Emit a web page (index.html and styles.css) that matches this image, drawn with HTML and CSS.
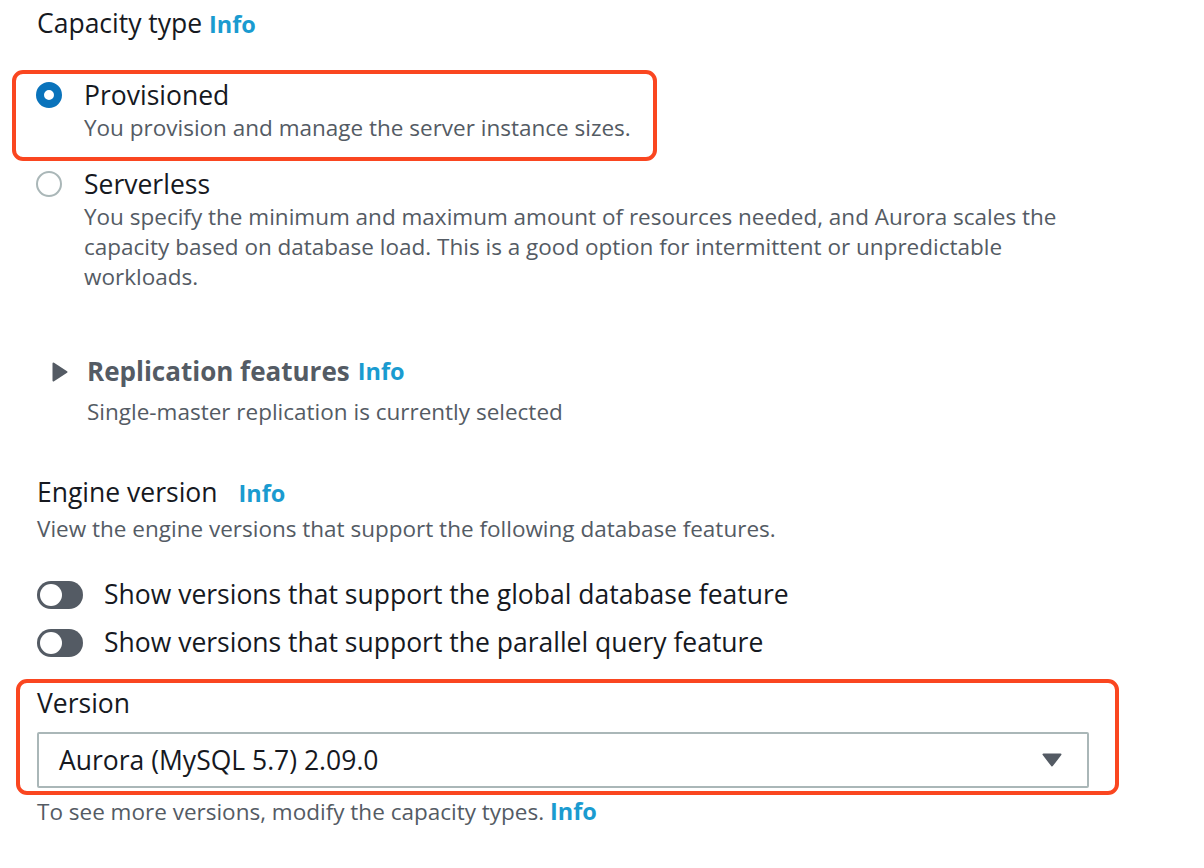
FILE: index.html
```html
<!DOCTYPE html>
<html>
<head>
<meta charset="utf-8">
<link rel="stylesheet" href="styles.css">
</head>
<body>
<div class="page">
  <div class="field-label">Capacity type <span class="info">Info</span></div>

  <div class="highlight hl-radio">
    <div class="radio-row">
      <span class="radio checked"></span>
      <div class="radio-text">
        <div class="radio-title">Provisioned</div>
        <div class="desc">You provision and manage the server instance sizes.</div>
      </div>
    </div>
  </div>
  <div class="radio-row plain">
    <span class="radio"></span>
    <div class="radio-text">
      <div class="radio-title">Serverless</div>
      <div class="desc">You specify the minimum and maximum amount of resources needed, and Aurora scales the capacity based on database load. This is a good option for intermittent or unpredictable workloads.</div>
    </div>
  </div>

  <div class="expander">
    <div class="expander-head">
      <svg class="caret-right" width="16" height="20" viewBox="0 0 16 20"><path d="M1.5 1.5 L14.5 10 L1.5 18.5 Z" fill="#545b64" stroke="#545b64" stroke-width="2" stroke-linejoin="round"/></svg>
      <span class="expander-title">Replication features</span><span class="info">Info</span>
    </div>
    <div class="expander-desc">Single-master replication is currently selected</div>
  </div>

  <div class="engine">
    <div class="field-label">Engine version <span class="info info-gap">Info</span></div>
    <div class="desc">View the engine versions that support the following database features.</div>
  </div>

  <div class="toggles">
    <div class="toggle-row"><span class="toggle"><span class="knob"></span></span><span class="toggle-label">Show versions that support the global database feature</span></div>
    <div class="toggle-row"><span class="toggle"><span class="knob"></span></span><span class="toggle-label">Show versions that support the parallel query feature</span></div>
  </div>

  <div class="highlight hl-version">
    <div class="field-label">Version</div>
    <div class="select">
      <span class="select-value">Aurora (MySQL 5.7) 2.09.0</span>
      <svg width="20" height="14" viewBox="0 0 20 14"><path d="M1.5 1.5 L18.5 1.5 L10 12.5 Z" fill="#545b64" stroke="#545b64" stroke-width="2" stroke-linejoin="round"/></svg>
    </div>
  </div>
  <div class="desc footer">To see more versions, modify the capacity types. <span class="info">Info</span></div>
</div>
</body>
</html>
```

FILE: styles.css
```css
html, body {
  margin: 0;
  padding: 0;
  background: #ffffff;
}
body {
  font-family: "Open Sans", "Noto Sans", "Liberation Sans", sans-serif;
  color: #16191f;
}
.page {
  padding: 5px 0 0 37px;
  width: 1100px;
}
.field-label {
  font-size: 26.5px;
  line-height: 36px;
  color: #16191f;
  white-space: nowrap;
}
.info {
  color: #1a9bd0;
  font-weight: 700;
  font-size: 23.5px;
}
.info-gap {
  margin-left: 14px;
}
.desc {
  font-size: 22.5px;
  line-height: 30px;
  color: #545b64;
}
.highlight {
  border: 4px solid #fa4620;
  border-radius: 11px;
}
.hl-radio {
  margin-top: 28px;
  margin-left: -25px;
  width: 645px;
  box-sizing: border-box;
  padding: 3px 0 14px 20px;
}
.radio-row {
  display: flex;
  align-items: flex-start;
  gap: 22px;
}
.plain {
  margin-top: 5px;
  margin-left: -1px;
  width: 1050px;
}
.radio {
  flex: none;
  width: 26px;
  height: 26px;
  box-sizing: border-box;
  border-radius: 50%;
  border: 2px solid #aab7b8;
  margin-top: 5px;
  background: #fff;
}
.radio.checked {
  border: 8px solid #0a73bb;
}
.radio-title {
  font-size: 26.5px;
  line-height: 36px;
  color: #16191f;
}
.expander {
  margin-top: 61px;
  padding-left: 15px;
}
.expander-head {
  display: flex;
  align-items: center;
  height: 36px;
}
.caret-right {
  margin-right: 19px;
  position: relative;
  top: 1px;
}
.expander-title {
  font-size: 26px;
  font-weight: 700;
  color: #545b64;
  margin-right: 8px;
}
.expander-desc {
  padding-left: 35px;
  font-size: 22.5px;
  line-height: 30px;
  color: #545b64;
  margin-top: 8px;
}
.engine {
  margin-top: 47px;
}
.engine .desc {
  margin-top: 3px;
}
.toggles {
  margin-top: 36px;
  display: flex;
  flex-direction: column;
  gap: 20px;
}
.toggle-row {
  display: flex;
  align-items: center;
  gap: 21px;
  height: 28px;
}
.toggle-row .toggle {
  position: relative;
  top: 1px;
}
.toggle {
  flex: none;
  width: 46px;
  height: 28px;
  border-radius: 14px;
  background: #545b64;
  display: flex;
  align-items: center;
  padding-left: 3px;
  box-sizing: border-box;
}
.knob {
  width: 22px;
  height: 22px;
  border-radius: 50%;
  background: #fff;
}
.toggle-label {
  font-size: 26.5px;
  color: #16191f;
  white-space: nowrap;
}
.hl-version {
  margin-top: 23px;
  margin-left: -21px;
  width: 1103px;
  box-sizing: border-box;
  padding: 0 0 3px 17px;
}
.hl-version .field-label {
  margin-top: 2px;
}
.select {
  margin-top: 11px;
  width: 1052px;
  height: 56px;
  box-sizing: border-box;
  border: 2px solid #aab7b8;
  border-radius: 2px;
  display: flex;
  align-items: center;
  justify-content: space-between;
  padding: 0 25px 0 20px;
}
.select-value {
  font-size: 26.5px;
  color: #16191f;
}
.footer {
  margin-top: 1px;
}
```
